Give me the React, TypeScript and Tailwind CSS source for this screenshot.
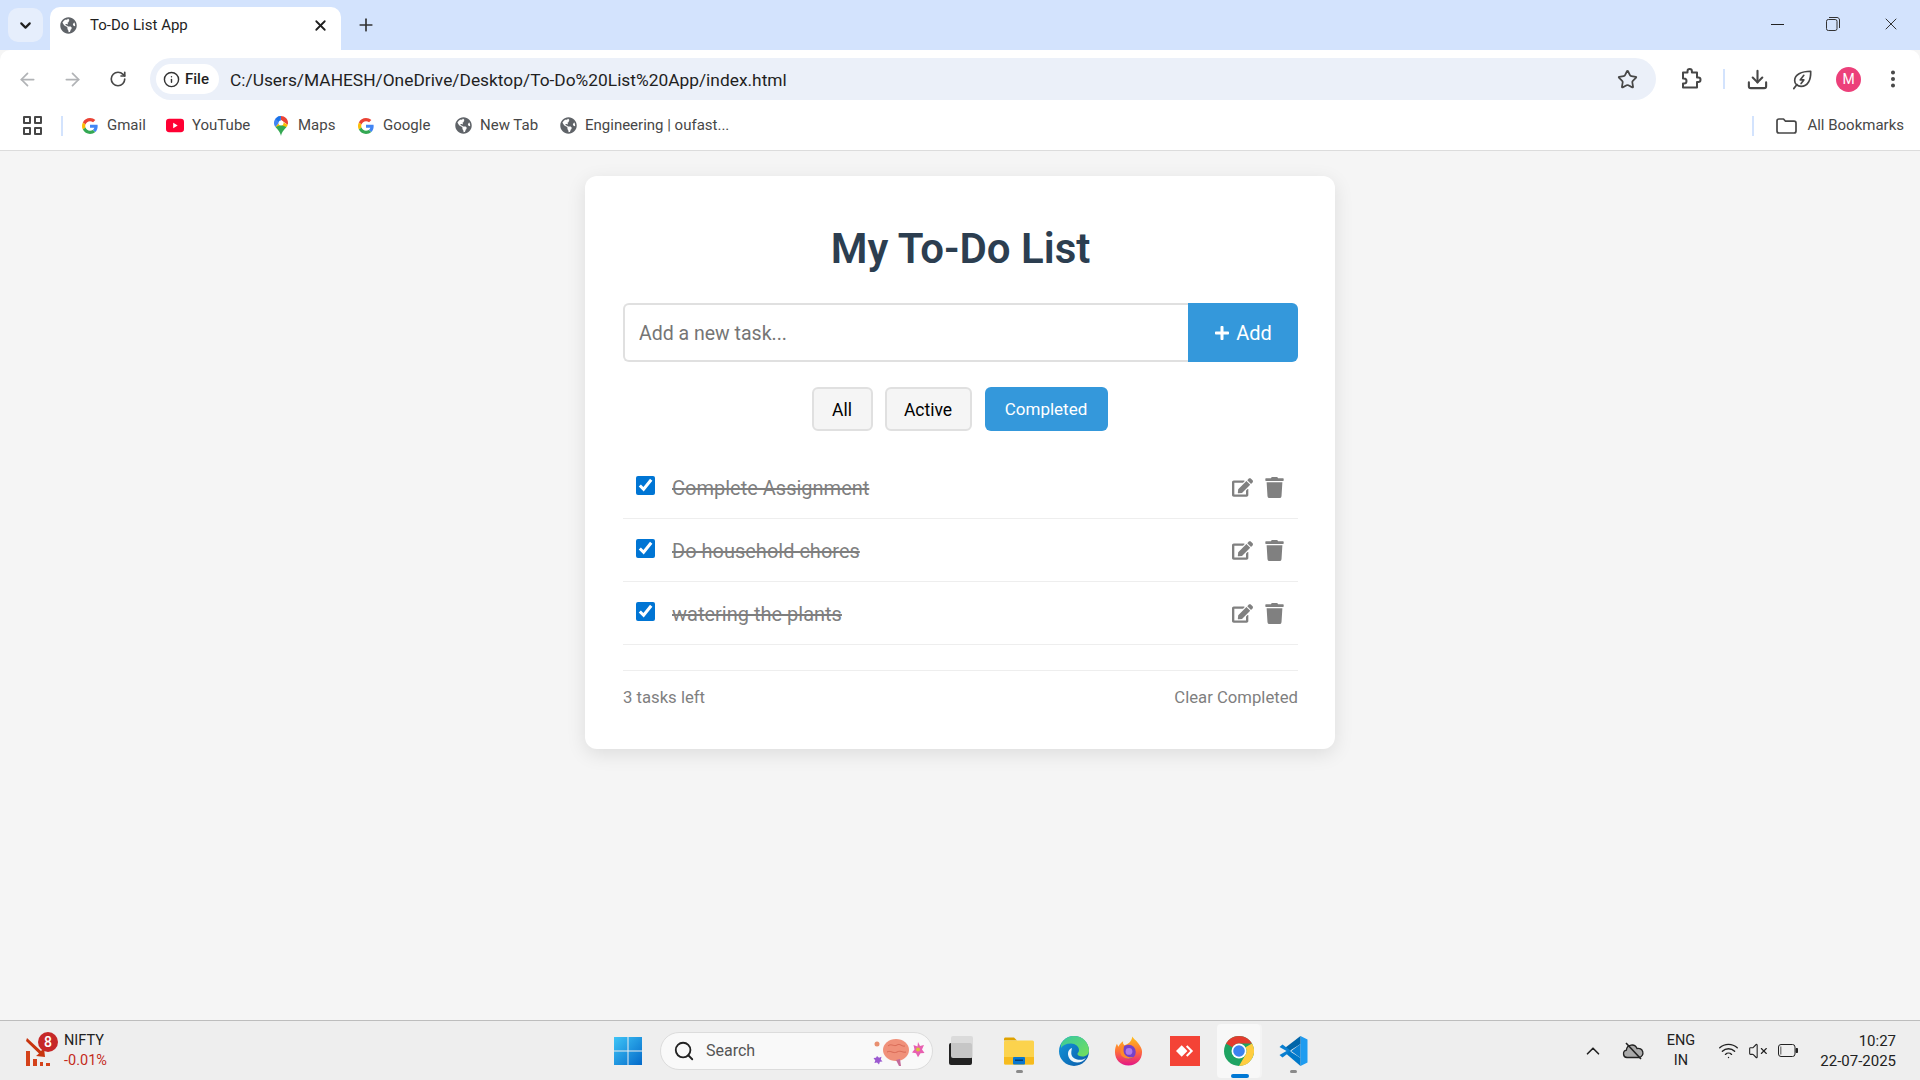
import { ArrowLeft, ArrowRight, ChevronDown, ChevronUp, Download, Info, MoreVertical, Plus, RotateCw, Search, Star, VolumeX, Wifi, X } from "lucide-react";
import { FaEdit, FaGlobeAmericas, FaPlus, FaTrash } from "react-icons/fa";

const tasks = ["Complete Assignment", "Do household chores", "watering the plants"];

const GoogleG = () => (
  <svg viewBox="0 0 48 48" className="w-[16px] h-[16px]">
    <path fill="#EA4335" d="M24 9.5c3.54 0 6.71 1.22 9.21 3.6l6.85-6.85C35.9 2.38 30.47 0 24 0 14.62 0 6.51 5.38 2.56 13.22l7.98 6.19C12.43 13.72 17.74 9.5 24 9.5z" />
    <path fill="#4285F4" d="M46.98 24.55c0-1.57-.15-3.09-.38-4.55H24v9.02h12.94c-.58 2.96-2.26 5.48-4.78 7.18l7.73 6c4.51-4.18 7.09-10.36 7.09-17.65z" />
    <path fill="#FBBC05" d="M10.53 28.59c-.48-1.45-.76-2.99-.76-4.59s.27-3.14.76-4.59l-7.98-6.19C.92 16.46 0 20.12 0 24c0 3.88.92 7.54 2.56 10.78l7.97-6.19z" />
    <path fill="#34A853" d="M24 48c6.48 0 11.93-2.13 15.89-5.81l-7.73-6c-2.15 1.45-4.92 2.3-8.16 2.3-6.26 0-11.57-4.22-13.47-9.91l-7.98 6.19C6.51 42.62 14.62 48 24 48z" />
  </svg>
);

const YouTubeIcon = () => (
  <svg viewBox="0 0 20 15" className="w-[20px] h-[15px]">
    <rect width="20" height="15" rx="3.5" fill="#ff0033" />
    <path d="M8 4.4 13 7.5 8 10.600z" fill="#fff" />
  </svg>
);

const MapsIcon = () => (
  <svg viewBox="0 0 14 20" className="w-[14px] h-[20px]">
    <path d="M7 0C3.100 0 0 3 0 6.900c0 1.700.6 3 1.500 4.200L7 5z" fill="#4285f4" />
    <path d="M7 0c-1 0-2 .2-2.900.6L1.500 3l3.500 3z" fill="#1a73e8" />
    <path d="M7 0c3.900 0 7 3 7 6.900 0 .7-.1 1.300-.3 1.900L7 4z" fill="#ea4335" />
    <path d="M1.500 11.100C3.500 13.600 6 15.500 7 20c1-4.500 3.500-6.400 5.500-8.900L7 6z" fill="#34a853" />
    <path d="M1.500 11.100 7 5l6.700 3.800c-.3.900-.7 1.600-1.200 2.300L7 9z" fill="#fbbc04" />
    <circle cx="7" cy="6.900" r="2.500" fill="#fff" />
  </svg>
);

const RestoreIcon = () => (
  <svg viewBox="0 0 14 14" className="w-[14px] h-[14px]" fill="none" stroke="#333" strokeWidth="1">
    <rect x=".5" y="2.500" width="10.500" height="11" rx="1.800" />
    <path d="M3 .5h8c1.400 0 2.500 1.100 2.500 2.500v8" />
  </svg>
);

const PuzzleIcon = () => (
  <svg viewBox="0 0 24 24" className="w-[24px] h-[24px]" fill="none" stroke="#474747" strokeWidth="2" strokeLinejoin="round">
    <path d="M5 5.500h4.500V4.200a2.200 2.200 0 0 1 4.400 0v1.300H19v5h1.300a2.200 2.200 0 0 1 0 4.400H19V20.500H5v-4h1a2.500 2.500 0 0 0 0-5H5z" />
  </svg>
);

const LeafBolt = () => (
  <svg viewBox="0 0 24 24" className="w-[22px] h-[22px]" fill="none" stroke="#474747" strokeWidth="1.800" strokeLinejoin="round" strokeLinecap="round">
    <path d="M21.500 3.500C21.800 13 18.500 20 11 20c-4 0-7-2.700-7-6.500C4 7.500 11 3.500 21.500 3.500z" />
    <path d="M3 22.500 6.500 18" />
    <path d="M14 8 10 13h4l-3 4" />
  </svg>
);

const FolderIcon = () => (
  <svg viewBox="0 0 21 16" className="w-[21px] h-[16px]" fill="none" stroke="#474747" strokeWidth="1.700" strokeLinejoin="round">
    <path d="M1 3c0-1.100.9-2 2-2h4.500l2 2.200H18c1.100 0 2 .9 2 2V13c0 1.100-.9 2-2 2H3c-1.100 0-2-.9-2-2z" />
  </svg>
);

const AppsIcon = () => (
  <div className="grid grid-cols-2 gap-[3px]">
    {[0, 1, 2, 3].map((i) => (
      <div key={i} className="w-[8px] h-[8px] border-[2px] border-[#474747] rounded-[1px]" />
    ))}
  </div>
);

const Bookmark = ({ icon, label, width }: { icon: React.ReactNode; label: string; width: string }) => (
  <div className={`flex items-center ${width}`}>
    <span className="w-[18px] flex justify-center shrink-0">{icon}</span>
    <span className="ml-[8px] whitespace-nowrap">{label}</span>
  </div>
);

const Globe = () => <FaGlobeAmericas className="text-[#5f6368] text-[17px]" />;

const WindowsLogo = () => (
  <svg viewBox="0 0 30 30" className="w-[30px] h-[30px]">
    <defs>
      <linearGradient id="win" x1="0" y1="0" x2="1" y2="1">
        <stop offset="0" stopColor="#3fc5f7" />
        <stop offset="1" stopColor="#0369c9" />
      </linearGradient>
    </defs>
    <path d="M1 1h13.500v13.500H1zM15.500 1H29v13.500H15.500zM1 15.500h13.500V29H1zM15.500 15.500H29V29H15.500z" fill="url(#win)" />
  </svg>
);

const TaskView = () => (
  <div className="relative w-[24px] h-[29px]">
    <div className="absolute left-0 bottom-0 w-[23px] h-[22px] bg-[#222] rounded-[2px]" />
    <div className="absolute right-0 top-0 w-[22px] h-[22px] bg-[#d8d8d8]/90 rounded-[2px]" />
  </div>
);

const Explorer = () => (
  <svg viewBox="0 0 30 30" className="w-[30px] h-[30px]">
    <path d="M0 3c0-.8.6-1.500 1.500-1.500H10l3 3H0z" fill="#dfa200" />
    <rect y="4.500" width="30" height="24" rx="1.500" fill="#fcd34d" />
    <path d="M0 21h30v6c0 1-.7 1.500-1.500 1.500h-27C.7 28.500 0 28 0 27z" fill="#f6bb1e" />
    <rect x="9" y="21" width="12" height="7.500" rx="1" fill="#0a78d0" />
    <rect x="11" y="23.500" width="8" height="1.500" fill="#063f73" />
  </svg>
);

const Edge = () => (
  <svg viewBox="0 0 30 30" className="w-[30px] h-[30px]">
    <defs>
      <linearGradient id="edgeTop" x1="0" y1="0" x2="1" y2="1">
        <stop offset="0" stopColor="#37c8a0" />
        <stop offset="1" stopColor="#74e05a" />
      </linearGradient>
      <linearGradient id="edgeBody" x1="0" y1="0" x2="1" y2="1">
        <stop offset="0" stopColor="#1499dd" />
        <stop offset="1" stopColor="#0a5aa8" />
      </linearGradient>
    </defs>
    <circle cx="15" cy="15" r="15" fill="url(#edgeBody)" />
    <path d="M2 8C5 2.500 10 0 15 0c8 0 15 6 15 14.500 0 3.500-2.500 6-6.500 6-3 0-5-1-5-2.500 0-1.500 1.500-1.500 1.500-4 0-3.500-3.500-6.500-8-6.500C7 7.500 4 9 2 12z" fill="url(#edgeTop)" />
    <path d="M13 12c-3 1-4.500 4-3.800 7.500.8 4 4.300 7 9 7 3.500 0 6.500-1.500 8.800-4.500-2 1.300-4 1.800-6 1.800-4 0-7.500-1.800-8.500-5-.6-2 .1-5 .5-6.800z" fill="#eef6fb" />
  </svg>
);

const Firefox = () => (
  <svg viewBox="0 0 30 30" className="w-[29px] h-[30px]">
    <defs>
      <linearGradient id="fx" x1="0.500" y1="0" x2="0.500" y2="1">
        <stop offset="0" stopColor="#ffc21a" />
        <stop offset="0.500" stopColor="#ff7139" />
        <stop offset="1" stopColor="#e31587" />
      </linearGradient>
    </defs>
    <path d="M19 0c1.500 3 5 4.500 7.500 9 2 3 2.500 5 2.500 7 0 8-6 14-14 14S1 24 1 16c0-3 .6-6 2-8.500l1.500 3C6 7.500 8 6 9.500 5 9 7 9.500 8 11 9c3-1 7-3 8-9z" fill="url(#fx)" />
    <circle cx="15" cy="16" r="7.500" fill="#7542c9" />
    <path d="M9 9c-3 3-3.500 9 0 12 3 2.500 8 2.500 11 .5-4 .5-8-1-9.500-4-1-2.500-.5-6 0-8z" fill="#ff8a2a" />
    <circle cx="15.500" cy="15.500" r="3.500" fill="#b07ae8" />
  </svg>
);

const RedApp = () => (
  <div className="w-[30px] h-[30px] bg-[#f44336] flex items-center justify-center">
    <svg viewBox="0 0 20 14" className="w-[19px] h-[14px]">
      <path d="M0 7 6 1l6 6-6 6z" fill="#fff" />
      <path d="M12 1l6 6-6 6-1.500-1.500L15 7l-4.500-4.500z" fill="#fff" />
    </svg>
  </div>
);

const Chrome = () => (
  <svg viewBox="0 0 30 30" className="w-[30px] h-[30px]">
    <circle cx="15" cy="15" r="15" fill="#1ea362" />
    <path d="M15 0a15 15 0 0 1 13 7.500H15a7.500 7.500 0 0 0-6.500 3.750L2 7.500A15 15 0 0 1 15 0z" fill="#e33b2e" />
    <path d="M28 7.500A15 15 0 0 1 15 30l6.500-11.250A7.500 7.500 0 0 0 21.500 11.250z" fill="#ffcd40" />
    <circle cx="15" cy="15" r="7.500" fill="#fff" />
    <circle cx="15" cy="15" r="5.800" fill="#3b82f0" />
  </svg>
);

const VSCode = () => (
  <svg viewBox="0 0 30 30" className="w-[31px] h-[30px]">
    <path d="M22 0 29 3.500v23L22 30z" fill="#1f9cf0" />
    <path d="M22 0v8L11 15 7 11.500 22 0z" fill="#0065a9" />
    <path d="M22 22 4 8.500 1 11l7 4-7 4 3 2.500L22 8z" fill="#0a7fd1" />
    <path d="M22 22v8L8 18l3-3z" fill="#0078c8" />
  </svg>
);

const CloudOff = () => (
  <svg viewBox="0 0 22 18" className="w-[22px] h-[18px]" fill="none" stroke="#222" strokeWidth="1.300">
    <path d="M5 15.500a3.700 3.700 0 0 1-.6-7.300A5.500 5.500 0 0 1 15 6.500a4.500 4.500 0 0 1 2.500 9z" fill="#aaa" />
    <path d="M4 1l15 16" strokeWidth="1.600" />
  </svg>
);

const Battery = () => (
  <svg viewBox="0 0 20 13" className="w-[20px] h-[13px]" fill="none" stroke="#222" strokeWidth="1">
    <rect x=".5" y=".5" width="16.500" height="12" rx="2.500" />
    <rect x="2" y="2.500" width="1.500" height="8" fill="#888" stroke="none" />
    <path d="M18 4.500h1.500v4H18z" fill="#222" />
  </svg>
);

export default function App() {
  return (
    <div className="w-full h-screen overflow-hidden flex flex-col bg-[#f5f5f5] font-['Roboto',sans-serif]">
      {/* tab strip */}
      <div className="h-[50px] shrink-0 bg-[#d3e3fd] flex pl-[8px]">
        <div className="mt-[8px] w-[35px] h-[34px] rounded-[10px] bg-[#e6eefc] flex items-center justify-center">
          <ChevronDown size={17} strokeWidth={3} className="text-[#1f1f1f]" />
        </div>
        <div className="ml-[7px] mt-[7px] w-[291px] h-[43px] bg-white rounded-t-[10px] flex items-center pl-[10px] pr-[12px] pb-[6px]">
          <Globe />
          <span className="ml-[13px] text-[15px] text-[#1f1f1f]">To-Do List App</span>
          <X size={17} strokeWidth={2.5} className="ml-auto text-[#1f1f1f]" />
        </div>
        <div className="ml-[15px] mt-[15px] h-[20px]">
          <Plus size={20} strokeWidth={2} className="text-[#333]" />
        </div>
        <div className="ml-auto flex items-center h-[48px] pr-[19px]">
          <div className="w-[13px] h-[1px] bg-[#222] mr-[42px]" />
          <RestoreIcon />
          <X size={20} strokeWidth={1.2} className="ml-[41px] text-[#333]" />
        </div>
      </div>

      {/* address bar */}
      <div className="h-[56px] shrink-0 bg-white rounded-t-[10px] flex items-center pt-[2px]">
        <ArrowLeft size={21} strokeWidth={2} className="ml-[17px] text-[#b1b3b6]" />
        <ArrowRight size={21} strokeWidth={2} className="ml-[24px] text-[#b1b3b6]" />
        <RotateCw size={18} strokeWidth={2.2} className="ml-[26px] text-[#474747]" />
        <div className="ml-[23px] w-[1506px] h-[42px] rounded-full bg-[#ebf0f9] flex items-center pl-[6px] pr-[18px]">
          <div className="w-[63px] h-[30px] rounded-full bg-white flex items-center pl-[7px]">
            <Info size={17} strokeWidth={2} className="text-[#333]" />
            <span className="ml-[5px] text-[15px] font-medium text-[#1f1f1f]">File</span>
          </div>
          <span className="ml-[11px] pt-[2px] text-[17.350px] text-[#1f1f1f] whitespace-nowrap">C:/Users/MAHESH/OneDrive/Desktop/To-Do%20List%20App/index.html</span>
          <Star size={21} strokeWidth={2} className="ml-auto text-[#474747]" />
        </div>
        <div className="ml-[22px]"><PuzzleIcon /></div>
        <div className="ml-[21px] w-[2px] h-[20px] bg-[#d3e3fd]" />
        <Download size={23} strokeWidth={2.2} className="ml-[21px] text-[#474747]" />
        <div className="ml-[22px]"><LeafBolt /></div>
        <div className="ml-[23px] w-[25px] h-[25px] rounded-full bg-[#ec407a] text-white text-[14px] flex items-center justify-center">M</div>
        <MoreVertical size={22} strokeWidth={2.4} className="ml-[21px] text-[#474747]" />
      </div>

      {/* bookmarks */}
      <div className="h-[45px] shrink-0 bg-white border-b border-[#dcdcdc] flex items-center pb-[5px] text-[15px] text-[#474747]">
        <div className="ml-[23px]"><AppsIcon /></div>
        <div className="ml-[19px] mr-[18px] w-[2px] h-[20px] bg-[#d3e3fd]" />
        <Bookmark icon={<GoogleG />} label="Gmail" width="w-[85px]" />
        <Bookmark icon={<YouTubeIcon />} label="YouTube" width="w-[106px]" />
        <Bookmark icon={<MapsIcon />} label="Maps" width="w-[85px]" />
        <Bookmark icon={<GoogleG />} label="Google" width="w-[97px]" />
        <Bookmark icon={<Globe />} label="New Tab" width="w-[105px]" />
        <Bookmark icon={<Globe />} label="Engineering | oufast..." width="w-[200px]" />
        <div className="ml-auto w-[2px] h-[20px] bg-[#d3e3fd]" />
        <div className="ml-[22px]"><FolderIcon /></div>
        <span className="ml-[10px] mr-[16px]">All Bookmarks</span>
      </div>

      {/* page */}
      <div className="flex-1 min-h-0 pt-[25px]">
        <div className="mx-auto w-[750px] h-[573px] bg-white rounded-[12px] shadow-[0_5px_19px_rgba(0,0,0,0.1)] pl-[38px] pr-[37px] pt-[45px]">
          <h1 className="text-[42px] leading-[55px] font-semibold text-center text-[#2c3e50]">My To-Do List</h1>

          <div className="mt-[27px] flex h-[59px]">
            <input
              type="text"
              placeholder="Add a new task..."
              className="flex-1 min-w-0 h-full border-2 border-[#e0e0e0] border-r-0 rounded-l-[6px] bg-white px-[14px] pt-[2px] text-[19.500px] outline-none placeholder:text-[#757575]"
            />
            <button className="w-[110px] h-full bg-[#3498db] text-white text-[20px] rounded-r-[6px] flex items-center justify-center gap-[6px]">
              <FaPlus className="text-[16px]" />
              Add
            </button>
          </div>

          <div className="mt-[25px] pr-[2px] flex justify-center">
            <button className="w-[61px] h-[44px] rounded-[6px] border-2 border-[#e0e0e0] bg-[#f5f5f5] pt-[2px] text-black text-[17.500px]">All</button>
            <button className="ml-[12px] w-[87px] h-[44px] rounded-[6px] border-2 border-[#e0e0e0] bg-[#f5f5f5] pt-[2px] text-black text-[17.500px]">Active</button>
            <button className="ml-[13px] w-[123px] h-[44px] rounded-[6px] bg-[#3498db] pt-[2px] text-white text-[17px]">Completed</button>
          </div>

          <ul className="mt-[25px]">
            {tasks.map((task) => (
              <li key={task} className="h-[63px] border-b border-[#eeeeee] flex items-center pl-[13px] pr-[13px]">
                <input type="checkbox" checked readOnly className="w-[19px] h-[19px] -mt-[3px] accent-[#0075d4]" />
                <span className="ml-[17px] pt-[2px] text-[20px] text-[#7f7f7f] line-through">{task}</span>
                <FaEdit className="ml-auto text-[#808080] text-[21px]" />
                <FaTrash className="ml-[11px] text-[#808080] text-[21px]" />
              </li>
            ))}
          </ul>

          <div className="mt-[25px] border-t border-[#eeeeee] pt-[15px] flex justify-between text-[16.700px] text-[#7f7f7f] leading-[24px]">
            <span>3 tasks left</span>
            <span>Clear Completed</span>
          </div>
        </div>
      </div>

      {/* taskbar */}
      <div className="h-[60px] shrink-0 bg-[#eeeeee] border-t border-[#bdbdbd] flex items-center">
        <div className="relative ml-[25px] w-[30px] h-[34px]">
          <svg viewBox="0 0 30 34" className="w-[30px] h-[34px]">
            <path d="M2 4 16 17l3-3 1 9-9-1 3-2.500L1 7z" fill="#c8350f" />
            <path d="M1 17h4v15H1zM8 25h4v7H8zM15 28h3v4h-3zM21 29h4v3h-4z" fill="#d4421a" />
          </svg>
          <div className="absolute -top-[2px] left-[13px] w-[20px] h-[20px] rounded-full bg-[#c62828] text-white text-[14px] leading-[20px] text-center font-medium">8</div>
        </div>
        <div className="ml-[9px] w-[80px] text-[14.500px] leading-[20px]">
          <div className="text-[#222]">NIFTY</div>
          <div className="text-[#c42b1c]">-0.01%</div>
        </div>
        <div className="ml-[469px]"><WindowsLogo /></div>
        <div className="ml-[17px] w-[273px] h-[38px] rounded-full bg-[#f9f9f9] border border-[#dcdcdc] flex items-center pl-[12px] pr-[6px]">
          <Search size={22} strokeWidth={2} className="text-[#222]" />
          <span className="ml-[11px] text-[16px] text-[#555]">Search</span>
          <span className="ml-auto relative w-[54px] h-[30px]">
            <svg viewBox="0 0 54 30" className="w-[54px] h-[30px]">
              <circle cx="5" cy="8" r="2.500" fill="#e88f6f" />
              <path d="M5 20l2 1.800 2.500-1-.7 2.700 1.700 2-2.600.2L7 28.500 5 26.500l-2.600.4.9-2.500L1.500 22l2.500-.3z" fill="#9b59d0" />
              <ellipse cx="24" cy="14" rx="13" ry="11" fill="#f0917a" />
              <path d="M16 10c3-3 6 1 9-1s5 2 8 1M15 16c4-2 6 2 10 0s6 1 9 0" stroke="#d96a56" strokeWidth="1" fill="none" />
              <path d="M24 24l3 6h2l-1-7z" fill="#c36a9a" />
              <path d="M46 6l2 4 4-1-2 4.500 2.500 3.500-4 .3-2.500 4-2-4-4-.7 2.500-3-1-4.500 4 1.300z" fill="#e85fb0" />
              <circle cx="46" cy="13.500" r="2" fill="#d8c43a" />
            </svg>
          </span>
        </div>
        <div className="ml-[16px]"><TaskView /></div>
        <div className="ml-[31px] relative">
          <Explorer />
          <div className="absolute -bottom-[7px] left-[12px] w-[7px] h-[3px] rounded-full bg-[#8a8a8a]" />
        </div>
        <div className="ml-[25px]"><Edge /></div>
        <div className="ml-[25px]"><Firefox /></div>
        <div className="ml-[27px]"><RedApp /></div>
        <div className="ml-[17px] relative w-[43px] h-[54px] bg-[#f8f8f8] rounded-[4px] shadow-[2px_0_0_#f4f4f4] flex items-center justify-center">
          <Chrome />
          <div className="absolute bottom-0 left-[14px] w-[18px] h-[4px] rounded-full bg-[#0078d4]" />
        </div>
        <div className="ml-[18px] relative">
          <VSCode />
          <div className="absolute -bottom-[7px] left-[12px] w-[7px] h-[3px] rounded-full bg-[#8a8a8a]" />
        </div>
        <ChevronUp size={22} strokeWidth={1.8} className="ml-[273px] text-[#222]" />
        <div className="ml-[18px]"><CloudOff /></div>
        <div className="ml-[19px] w-[36px] text-[14.500px] leading-[20px] text-center text-[#222]">
          <div>ENG</div>
          <div>IN</div>
        </div>
        <Wifi size={21} strokeWidth={1.6} className="ml-[19px] text-[#222]" />
        <VolumeX size={20} strokeWidth={1.3} className="ml-[9px] text-[#222]" />
        <div className="ml-[10px]"><Battery /></div>
        <div className="ml-auto pr-[24px] text-right text-[15px] leading-[20px] text-[#222]">
          <div>10:27</div>
          <div>22-07-2025</div>
        </div>
      </div>
    </div>
  );
}
